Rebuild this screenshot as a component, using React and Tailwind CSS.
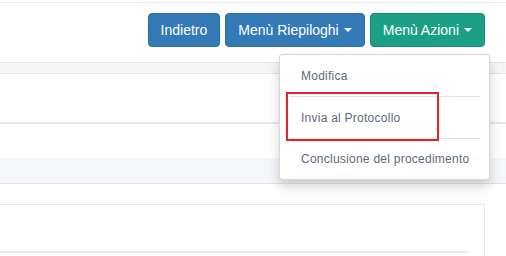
import React from 'react';

function Caret() {
  return (
    <span className="ml-[5px] inline-block h-0 w-0 border-x-[4px] border-t-[4px] border-x-transparent border-t-white align-middle" />
  );
}

const items = ['Modifica', 'Invia al Protocollo', 'Conclusione del procedimento'];

export default function App() {
  return (
    <div
      className="relative h-[256px] w-[506px] overflow-hidden bg-white"
      style={{ fontFamily: '"Liberation Sans", Arial, sans-serif' }}
    >
      <div className="h-[2px]" />
      <div className="h-px bg-[#e8eaf1]" />

      {/* toolbar */}
      <div className="flex justify-end gap-[5px] pr-[21px] pt-[10px]">
        <button className="flex h-[34px] items-center rounded-[4px] border border-[#2e6da4] bg-[#337ab7] px-[12px] text-[14px] text-white">
          Indietro
        </button>
        <button className="flex h-[34px] items-center rounded-[4px] border border-[#2e6da4] bg-[#337ab7] px-[12px] text-[14px] text-white">
          Menù Riepiloghi
          <Caret />
        </button>
        <button className="flex h-[34px] items-center rounded-[4px] border border-[#179077] bg-[#1ba086] px-[12px] text-[14px] text-white">
          Menù Azioni
          <Caret />
        </button>
      </div>

      {/* page sections */}
      <div className="mt-[15px] h-[12px] border-y border-[#e3e5ec] bg-[#f5f5f5]" />
      <div className="h-[48px]" />
      <div className="h-[2px] bg-[#e3e7ee]" />
      <div className="h-[34px]" />
      <div className="h-[25px] bg-[#f4f6fa]" />
      <div className="h-px bg-[#e3e5ec]" />
      <div className="h-[20px]" />
      <div className="-ml-px mr-[21px] border-r border-t border-[#e6e8ec]">
        <div className="h-[46px]" />
        <div className="mr-[16px] h-[2px] bg-[#e8ebef]" />
        <div className="h-[10px]" />
      </div>

      {/* dropdown menu */}
      <div className="absolute left-[279px] top-[54px] w-[211px] rounded-[4px] border border-black/15 bg-white shadow-[0_6px_12px_rgba(0,0,0,0.175)]">
        {items.map((label, i) => (
          <div key={label}>
            {i > 0 && <div className="mx-[9px] h-px bg-[#e5e5e5]" />}
            <div
              className={`flex items-center pl-[21px] text-[12px] tracking-[0.25px] text-[#5b6b7d] ${
                i === 2 ? 'h-[40px]' : 'h-[41px]'
              }`}
            >
              {label}
            </div>
          </div>
        ))}
      </div>

      {/* highlight box */}
      <div className="absolute left-[286px] top-[92px] h-[49px] w-[153px] border-2 border-[#e2222c]" />
    </div>
  );
}
